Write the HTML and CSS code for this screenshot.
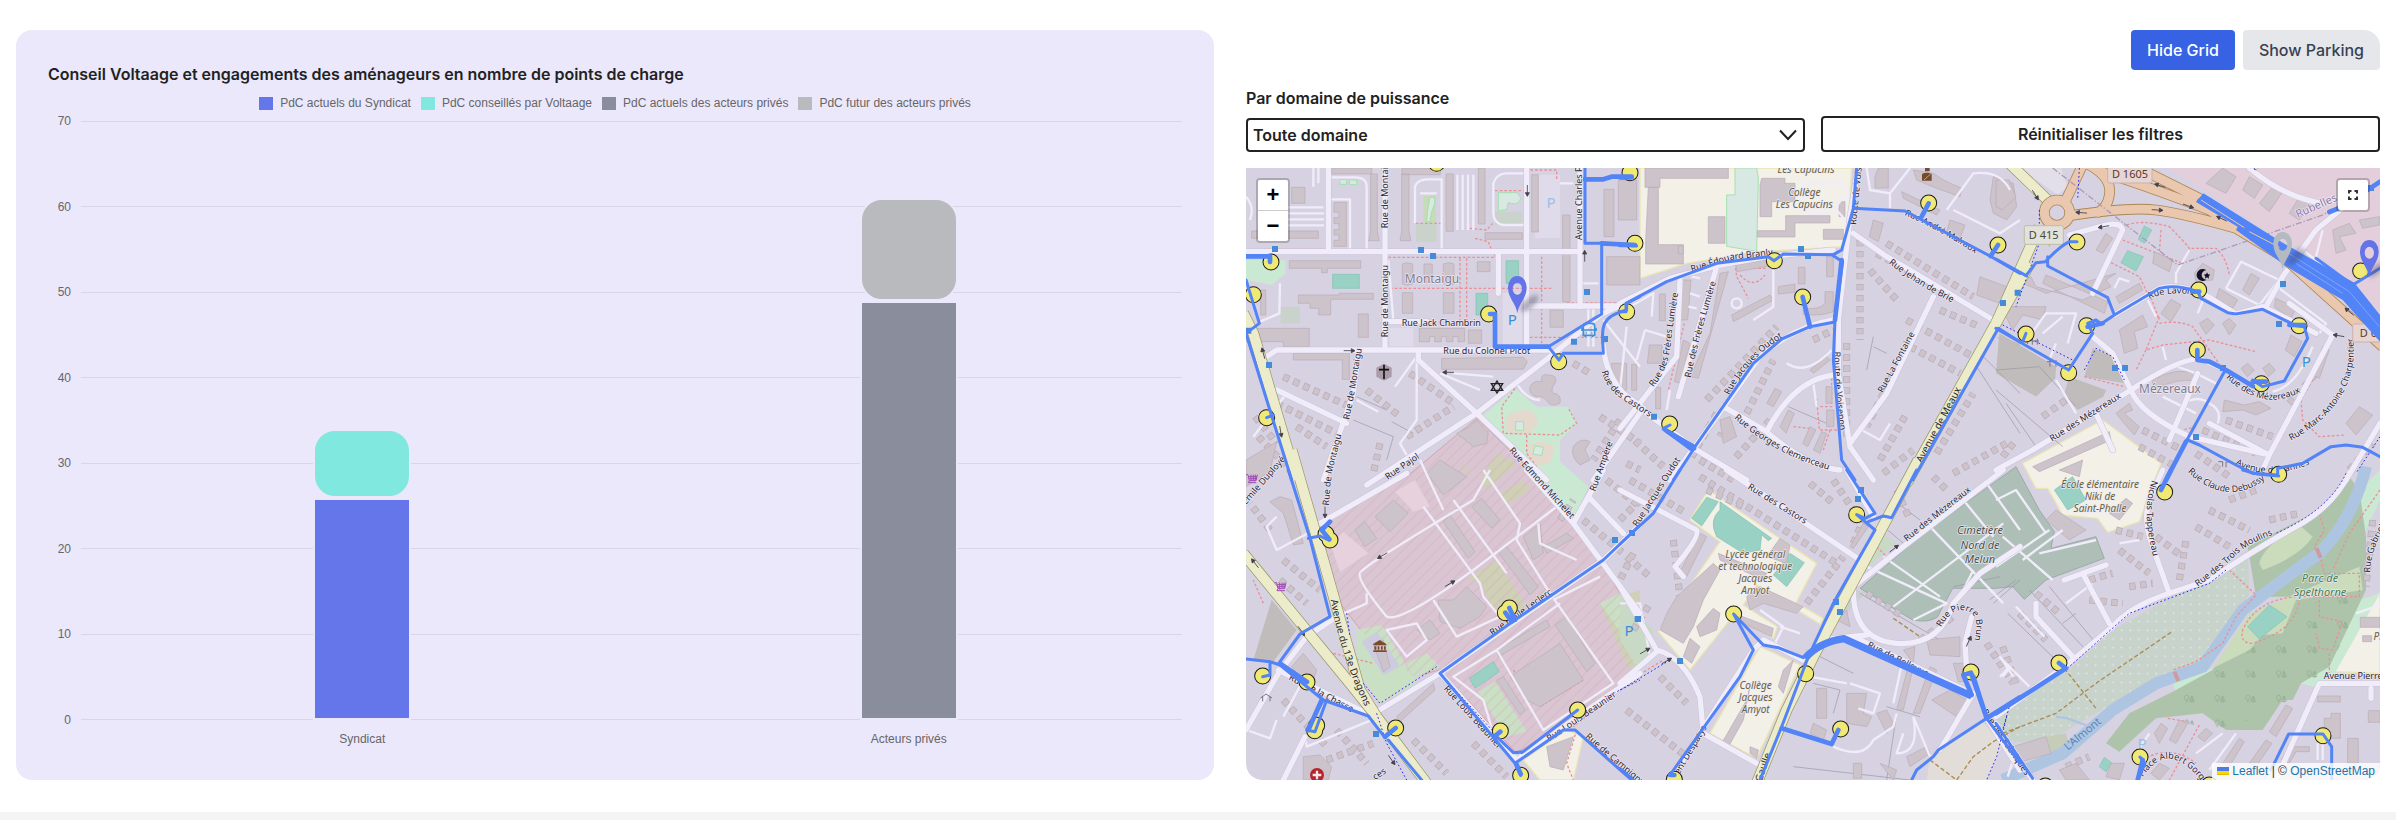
FILE: index.html
```html
<!DOCTYPE html>
<html lang="fr">
<head>
<meta charset="utf-8">
<meta name="viewport" content="width=device-width, initial-scale=1">
<title>Conseil Voltaage</title>
<link rel="stylesheet" href="styles.css">
</head>
<body>
<main class="dashboard">
  <section class="panel">
    <h2 class="panel-title">Conseil Voltaage et engagements des aménageurs en nombre de points de charge</h2>
    <ul class="legend">
      <li><span class="swatch blue"></span>PdC actuels du Syndicat</li>
      <li><span class="swatch teal"></span>PdC conseillés par Voltaage</li>
      <li><span class="swatch slate"></span>PdC actuels des acteurs privés</li>
      <li><span class="swatch grey"></span>PdC futur des acteurs privés</li>
    </ul>
    <div class="chart">
      <div class="y-axis"><span>70</span><span>60</span><span>50</span><span>40</span><span>30</span><span>20</span><span>10</span><span>0</span></div>
      <div class="lines"><i></i><i></i><i></i><i></i><i></i><i></i><i></i><i></i></div>
      <div class="bars">
        <div class="stack"><div class="bar teal round" style="height:11.43%"></div><div class="bar blue" style="height:37.14%"></div></div>
        <div class="stack"><div class="bar grey round" style="height:17.14%"></div><div class="bar slate" style="height:70%"></div></div>
      </div>
      <div class="x-axis"><span>Syndicat</span><span>Acteurs privés</span></div>
    </div>
  </section>

  <section class="map-side">
    <div class="actions">
      <button type="button" class="btn primary">Hide Grid</button>
      <button type="button" class="btn secondary">Show Parking</button>
    </div>
    <div class="filters">
      <div class="field">
        <label for="power">Par domaine de puissance</label>
        <div class="select-wrap">
          <select id="power"><option>Toute domaine</option></select>
          <svg class="chevron" viewBox="0 0 18 12" aria-hidden="true"><path d="M1 1.500 9 10l8-8.500"/></svg>
        </div>
      </div>
      <button type="button" class="reset">Réinitialiser les filtres</button>
    </div>

    <div class="map">
      <svg class="map-canvas" viewBox="0 0 1134 612" preserveAspectRatio="xMidYMid slice" role="img" aria-label="Carte de Melun">
        <defs>
          <pattern id="hatch" width="24" height="24" patternUnits="userSpaceOnUse" patternTransform="rotate(-45)"><path d="M0 12H24" stroke="#d3a9b3" stroke-width="1.500"/></pattern>
          <pattern id="dotted" width="26" height="26" patternUnits="userSpaceOnUse"><path d="M13 10v6M10 13h6" stroke="#e6ece8" stroke-width="2"/></pattern>
          <pattern id="trees" width="92" height="74" patternUnits="userSpaceOnUse"><path d="M20 32v-8m0 0c-10 0-8-14 0-14s10 14 0 14M36 32V12l-7 16h14l-7-16" fill="none" stroke="#8fac8d" stroke-width="2.500"/></pattern>
          <path id="pin" d="M0 72C-4 42-28 28-28-6A28 34 0 0 1 28-6C28 28 4 42 0 72ZM0-20A14 18 0 0 0 0 16 14 18 0 0 0 0-20Z" fill-rule="evenodd"/>
          <path id="cart" d="M0 4h7l4 18h20l4-18M8 10h26M10 16h22M16 4v18M23 4v18M29 4v18M11 22l-3 6h24" fill="none" stroke="#a04ab5" stroke-width="3"/>
          <path id="arrow" d="M-17 0H15M6-6 17 0 6 6Z" stroke-width="2.500"/>

          <path id="l1" d="M444 205V-20"/><path id="l2" d="M444 532V290"/><path id="l3" d="M328 780L345 690 368 550"/>
          <path id="l4" d="M266 1037L275 940 308 810"/><path id="l5" d="M443 960L560 880"/><path id="l6" d="M806 872L1005 1092"/>
          <path id="l7" d="M1066 995L1128 820"/><path id="l8" d="M1027 240V-80"/><path id="l9" d="M1085 635Q1100 690 1160 727L1250 785"/>
          <path id="l10" d="M100 682Q152 620 155 520L182 350"/><path id="l11" d="M212 654Q228 560 305 310"/><path id="l12" d="M215 336L330 300 480 282"/>
          <path id="l13" d="M328 706Q385 590 500 525"/><path id="l14" d="M642 575Q645 720 665 850"/><path id="l15" d="M708 195L735 -80"/>
          <path id="l16" d="M853 165Q960 210 1095 300"/><path id="l17" d="M806 310Q880 370 1020 440"/><path id="l18" d="M788 700L910 475"/>
          <path id="l19" d="M905 910L1050 640"/><path id="l20" d="M342 775Q480 895 650 935"/>
          <path id="l21" d="M460 417Q530 385 640 415"/><path id="l22" d="M168 845L400 698"/><path id="l23" d="M690 652Q810 770 940 680"/>
          <path id="l24" d="M885 842Q1110 720 1066 500"/><path id="l25" d="M718 912Q830 975 990 890"/><path id="l26" d="M650 -18L860 60"/>
          <path id="l27" d="M905 174L1040 115"/>
          <path id="l28" d="M18 105L140 -35"/><path id="l29" d="M272 390Q300 560 390 740"/><path id="l30" d="M145 628L360 740"/>
          <path id="l31" d="M757 497L960 355"/><path id="l32" d="M610 657L790 855"/><path id="l33" d="M928 815L1150 665"/><path id="l34" d="M1035 802L1220 960"/>
          <path id="l35" d="M52 172L200 -60"/><path id="l36" d="M382 55L590 185"/><path id="l37" d="M860 215L1080 42"/>
          <path id="l38" d="M963 472Q1000 405 1045 425Q1085 440 1060 520"/><path id="l39" d="M740 530L1000 660"/><path id="l40" d="M1085 725L1235 945"/>
          <path id="l41" d="M372 1090L485 760"/><path id="l42" d="M145 970L280 740"/>
          <path id="l43" d="M575 5Q700 125 830 10"/><path id="l44" d="M468 30Q425 150 500 345"/><path id="l45" d="M605 350Q680 295 720 255T860 185"/>
          <path id="l46" d="M215 842L340 740"/><path id="l47" d="M440 922Q520 800 625 945"/><path id="l48" d="M1122 308Q1125 230 1180 150"/>

          <g id="roads">
            <path class="ta" d="M18 275H1020M265 24V270M435 24V560M80 590 110 570H930M110 690 320 790M355 580 340 700 250 960M1020 24V440M535 575V600L710 760 920 960M380 975 710 760 930 590 1085 462 1200 410M860 24V560M775 275V400M870 438H1160M440 485H560M1090 555Q1095 640 1150 700L1210 745 1060 960"/>
            <path class="tb" d="M700 220 800 290 920 360 1120 480M940 410 800 700 690 850M0 430 150 355 300 315 440 290 640 270M640 480Q520 500 420 590L225 860 150 960M0 805 170 590 180 360M175 710 290 320M0 700 230 870 380 960M310 740 440 815Q560 920 660 930M440 815Q520 660 640 645M715 24 690 170 655 480 655 640 690 860 760 960"/>
            <path class="tc" d="M290 400 380 210Q375 185 330 195L220 225M290 530 350 580 405 690Q430 760 580 830L820 885M405 690 110 870 0 930M405 690Q540 600 610 595L690 630M820 885 1010 525 880 430M820 885 800 930M355 465 490 385Q540 370 620 400L720 462 800 440 960 520M810 440 860 350 960 210 1110 85M760 24Q860 110 980 130M300 760 350 870M820 885 640 790M520 840 605 640M1152 790 1050 960"/>
            <path class="td" d="M240 160 500 10M410 725 600 610 1090 270 1200 165M18 780 115 610 200 500 290 440M115 600 390 735M600 610 830 870 1200 610M860 0 1000 160 1200 430M1000 160 1045 80 1090 0M1045 80 1150 190M130 930 195 800"/>
            <path class="te" d="M320 0 720 270M0 60 230 180Q240 200 165 290L190 320M700 350 850 230 1150 0M700 360Q700 510 830 520T1000 400L1080 310 1200 230M1040 600 1035 520 1055 440M1060 670 960 840M740 495 600 510 550 570 430 510 400 540 150 930M0 350 110 540Q190 560 240 680L250 790 410 880M110 545 0 640M1055 670 700 500M680 0 760 140M1100 745 1200 900"/>
            <path class="tf" d="M1060 10Q1010 110 900 170T640 330L520 370Q400 410 350 470L230 570 0 740M520 370 470 230Q440 150 460 90L500 0M340 460 260 310 330 285 205 330M235 565 120 440V400M840 930 970 640H1152M1125 655v30M0 760 110 930"/>
          </g>
          <g id="yellow-roads">
            <path class="ta" d="M10 460 40 520 170 960"/>
            <path class="tb" d="M1230 310 1150 450 860 970"/>
            <path class="tc" d="M30 0 165 130M130 200 0 490"/>
            <path class="td" d="M155 -60 250 270 360 660 410 740 560 940M10 250 330 640 410 740"/>
            <path class="te" d="M895 -30 580 560 500 720 410 940"/>
          </g>
          <g id="orange-roads" class="tc">
            <path d="M270 10Q350 50 340 105Q335 145 300 160M210 120 262 10M215 168Q400 140 480 150T720 205L860 290 1160 560M300 30Q430 70 640 150L860 290M400 10 640 130"/>
            <circle cx="183" cy="158" r="38"/>
          </g>
          <g id="houses">
            <path class="ta" d="M130 650 330 740M110 730 300 825M45 770 110 850M170 800 260 860M380 690 480 770M420 850 400 940M510 640 640 730M500 830 640 740M1080 770 1200 850M1140 780 1060 900M1160 910 1200 930M55 830 150 930M1000 610 1050 640"/>
            <path class="tb" d="M20 820 130 920M260 720 470 500M290 760 210 900M320 790 300 830M240 900 340 960M680 550V830M720 240V540M800 250 1060 410M770 280 930 370M860 480 1060 590M870 560 1020 640M820 640 740 800M780 900 860 760M960 450 1080 500M790 940 880 870M380 760 460 600M950 880 1060 700M1000 940 1160 850M450 780 340 900M580 540 640 510M750 330 830 420"/>
            <path class="tc" d="M440 810 560 870M620 810 780 880M690 780 830 830M430 860 540 920M600 880 700 950M880 730 960 640M1060 930 1130 850M140 770 210 720M20 890 60 840"/>
            <path class="td" d="M90 180 30 100M130 270 240 360M120 330 200 400M30 280 80 340M1030 150 1150 250M1100 30 1200 110M130 690 260 830M290 780 380 880M520 810 620 910M700 820 800 920M960 150 1000 90M1180 250 1140 330M260 870 400 820"/>
            <path class="te" d="M30 30 200 130M240 20 650 280M260 60 370 110M640 30 700 120M570 40 640 100M560 400 670 260M0 150 60 90M160 210 180 380M40 480 90 400M20 720 200 860M120 620 200 700M940 20 980 60M830 60 870 150M1100 520 1180 640M700 220 730 150M20 260 90 320M900 510 1000 440M740 370 850 440"/>
            <path class="tf" d="M360 180 440 200M370 240 460 310M480 200 560 260M400 350 470 340M600 170 700 230M280 330 350 310M280 390 380 400M120 370 190 430M70 430 150 510M20 530 60 640M640 120 760 180M820 150 910 130M1130 150 1110 350M550 330 570 210M210 890 280 860M700 90 780 60"/>
          </g>
          <g id="stops">
            <path class="ta" d="M590 10h0M93 306h0M40 404h0M746 462h0M956 605h0M1160 455h0M1185 250h0M1170 38h0M80 773h0"/>
            <path class="tb" d="M463 302h0M548 411h0M926 129h0M1134 255h0M149 792h0"/>
            <path class="tc" d="M243 246h0M272 497h0M90 522h0M218 638h0M608 390h0M604 570h0M909 497h0M796 671h0M848 943h0M1094 333h0"/>
            <path class="td" d="M270 210h0M258 192h0M68 618h0M201 636h0M230 766h0M224 782h0M467 774h0M781 783h0M1013 720h0M842 916h0M808 414h0M796 428h0"/>
            <path class="te" d="M710 134h0M341 432h0M557 611h0M662 777h0M1053 606h0M163 928h0"/>
            <path class="tf" d="M506 66h0M189 579h0M432 861h0M981 797h0M148 948h0M640 945h0"/>
          </g>
        </defs>

        <rect width="1134" height="612" fill="#d6d2e2"/>

        <g class="land">
          <g class="ta">
            <path fill="#cae9d3" d="M18 300H135L138 340 95 375 18 360ZM725 770 825 685 890 740 985 740 1012 790 960 840V905L1045 980 1000 1080 870 930Z"/>
            <path fill="#e3dacd" d="M800 770Q830 740 880 755L897 790 870 820 795 822ZM860 860Q900 830 945 860L930 910 880 920 862 890Z"/>
            <path fill="#c5dcb6" d="M550 108h38v82h-38Z"/><path fill="#c9d3cb" d="M528 190h62v56h-62ZM765 155h82v40h-82ZM122 440h58v50h-58Z"/>
            <path class="garden" d="M570 112h14v20l-10 25-4 28h-10l3-35ZM775 98h55q15 10 10 25-15 15-35 4l-5 22-25 3ZM300 58h20v15h-20ZM328 60h22v14h-22ZM827 785h24v26h-24ZM885 857l25 5-5 25-26-5Z"/>
            <path class="pitch" d="M278 343h80v42h-80ZM798 302h38v68h-38ZM708 400h35v65h-35Z"/>
            <path fill="#dfdbea" d="M448 503h72v60h-72ZM788 398h58v160h-58ZM885 44h75v190h-75Z"/>
          </g>
          <g class="tb">
            <path class="school" d="M60 24H695L680 260 410 275 200 310 60 355Z"/>
            <path class="garden" d="M345 24h65l5 30-5 220-90-15V105h25Z"/>
            <path fill="#bfbcbb" d="M1130 530 1200 550V640L1150 600 1175 580Z"/>
          </g>
          <g class="tc">
            <path fill="#e2cfdb" d="M470 0H1152V470L1000 310 830 225 640 100Z"/>
            <path fill="#e3dfe9" d="M50 10H190L215 80 185 105Z"/>
            <path class="pitch" d="M445 198l22 12-22 40-18-12ZM395 272l47 18-22 43-45-25Z"/>
            <path fill="#bfbcbb" d="M10 520 180 620 178 655 120 710 0 640ZM290 565 355 590 388 670 265 650ZM220 650 330 690 322 710 245 750 205 700Z"/>
          </g>
          <g class="td">
            <path fill="#bfbcbb" d="M95 390 170 480 100 575 40 570Z"/>
            <path fill="#dac6d3" stroke="#d5a2aa" stroke-width="3" d="M710 -155 870 0 1110 320 1200 470V610L830 850 600 600 520 620 370 490 300 400 235 165 500 20Z"/>
            <path fill="#cfd0b5" d="M670 0 700 25 660 -30ZM770 -50 830 -20 740 60 720 30ZM680 330 770 270 855 400 840 440 760 420 720 340ZM1080 400 1200 360V600L1165 595ZM780 70 850 30 870 60 800 105Z"/>
            <path fill="#cae0c4" d="M1080 400 1140 370 1200 440V570ZM350 480 425 465 530 640 420 700 350 600ZM500 580 560 550 600 590 520 625ZM715 665 765 635 860 785 800 800Z"/>
            <path fill="url(#hatch)" d="M710 -155 870 0 1110 320 1200 470V610L830 850 600 600 520 620 370 490 300 400 235 165 500 20Z"/>
            <path class="pitch" d="M688 625l72-50 18 30-73 50Z"/>
            <path fill="#cccbe0" d="M365 515 410 485 480 590 430 615Z"/>
            <path fill="#e6d1dd" d="M270 220 310 185 385 250 300 305ZM465 65 525 30 570 110 520 125Z"/>
            <path class="school" d="M850 870 980 780 1030 800 1000 930H900Z"/>
          </g>
          <g class="te">
            <path class="school" d="M265 60 590 280 528 398 610 445 600 462 410 345 370 405 472 470 460 505 345 430 210 600 115 485 300 215 210 150ZM420 530 540 585 410 865 270 790Z"/>
            <path class="pitch" d="M260 82 295 95 245 168 215 145ZM300 95 455 205 445 212 425 195 420 240 370 250 290 200Q265 150 300 120ZM510 250 553 278 500 350 460 315Z"/>
            <path fill="#c8dac5" d="M0 380 100 480 90 580 50 590 0 510ZM790 190 830 220 745 290 725 280ZM1150 790 1200 700V820Z"/>
            <path fill="#e2ddd9" d="M930 870 1080 750 1150 820 1100 930H920Z"/>
            <path fill="#bacbb6" d="M610 440 600 510 740 365 690 360Z" opacity=".4"/>
          </g>
          <g class="tf">
            <path class="school" d="M80 -20 320 -150 495 -20 430 155 335 187 305 145 200 135 155 55 120 55ZM1152 370 1090 400 1015 605 1152 610Z"/>
            <path class="cemetery" d="M-408 355-230 200 60-10 130 120 175 185 165 235 300 200 325 265 150 330 85 388 50 350 0 355-130 355-175 440Q-200 460-250 450Z"/>
            <path class="pitch" d="M175 60 230 20 270 90 215 120Z"/>
            <path fill="#cae9d3" d="M1110 40 1152 0V90L1110 180 1080 200 1040 200ZM530 640 650 595 640 630 540 665ZM915 640 1090 390 1152 370 1000 640 970 655Z"/>
            <path fill="#c8d3cc" d="M20 790 0 740 230 590 350 480 520 385 650 330 755 240 760 370 700 500 600 580 470 640 300 730 180 800 60 820Z"/>
            <path fill="url(#dotted)" d="M20 790 0 740 230 590 350 480 520 385 650 330 755 240 760 370 700 500 600 580 470 640 300 730 180 800 60 820Z"/>
            <path class="forest" d="M330 820 400 730 530 665 650 600 760 440 900 380 780 380 755 230 970 120 1060 20 1090 60 1110 200 1110 360 1000 590 915 640 890 690 860 690 800 780 690 780 620 730 480 745 370 845Z"/>
            <path fill="#cadcbc" d="M790 280Q800 230 910 165L950 200Q910 260 800 300ZM650 595 760 430 1090 290 1100 360 900 390 860 490 800 495 760 540Z"/>
            <path fill="url(#trees)" d="M430 740 650 600 760 540 870 470 1000 370 1100 400 1000 590 880 690 700 780Z"/>
            <path fill="#c5cdb8" d="M150 800 210 790 220 830 160 860Z"/>
            <path class="river" d="M20 930 200 850 350 720 480 640 620 590 740 420 900 300 970 250Q1070 150 1110 -10"/>
            <path class="stream" d="M180 740 215 745 240 755 270 765"/>
            <path class="pitch" d="M755 470 820 405 873 440 790 507ZM310 890l15-28 22 16-17 27Z"/>
          </g>
        </g>

        <g class="footways">
          <path class="ta" d="M70 268H258V255M445 292H765V265M450 385H940M660 295V480M680 295V480M905 290V560M870 532H1090M527 190H605M690 205 740 210 758 190M705 235 745 245 755 270M765 92H865V30H950V60M980 428H1150L1200 400M825 685 785 740 790 820 960 825 1010 790 985 745M860 825 860 880 905 940"/>
          <path class="tb" d="M0 430 220 325 280 310M345 310 350 350 385 415M345 325H440M360 345Q400 390 435 345M193 490 145 690M590 715 598 810H660M570 805 520 800M635 640V740H600M630 810 610 870"/>
          <path class="tc" d="M380 200Q430 175 520 200 560 240 580 265H660Q690 290 700 345M380 240 560 310 580 265M495 210 490 280M345 308 430 350 460 410M490 470 450 570 500 555 640 540 780 575M490 490Q550 480 590 500L640 570 690 640M460 400 490 480M450 570 420 630M950 660 915 720 920 780 970 830 1050 825M265 650 385 680M600 800 560 810"/>
          <path class="td" d="M820 600 900 710 1030 630M70 400 40 330M1010 780 980 880 1000 930M1200 610 1000 770M280 550 400 580"/>
          <path class="te" d="M0 650 130 570M770 230 800 260"/>
          <path class="tf" d="M690 290 780 375 720 440 680 520 600 575 530 600M970 130 985 180 955 230 975 270 985 310H1090V380H900Q780 390 740 480 730 520 770 520 900 480 910 390M970 390V440L1040 455 1010 540 970 535 960 490M1000 550V610M1152 60 1060 190 1010 300M515 745 575 755M610 765 520 930M830 880 800 930M440 870Q520 820 600 880"/>
        </g>
        <g class="thin">
          <path class="ta" d="M340 780 460 830 440 900M350 710 440 750M455 785 520 820"/>
          <path class="tb" d="M760 530 740 630M760 560 800 580M1090 590 1200 700M1070 620 1200 820M505 740 620 790"/>
          <path class="tc" d="M0 630 130 620 240 740M0 690 200 860M30 730 120 860"/>
          <path class="te" d="M820 90 900 150M780 160 850 220M560 540 700 610M580 640 660 660 640 730M520 890 870 930M830 730 800 930M800 710 900 740M720 370 960 510M1000 350 1140 320M1120 400 1200 330"/>
          <path class="tf" d="M35 430 200 590M100 360 270 540M160 350 300 520M200 460 240 430M-20 390 60 330"/>
        </g>

        <use href="#houses" class="houses-edge"/>
        <use href="#houses" class="houses-fill"/>
        <g class="buildings">
          <path class="ta" d="M148 302H362V325H262V338H245V325H148ZM175 405H298V400H400V418H272V465H236V445H210V430H175ZM355 462h30v70h-30ZM18 505H208V560H130V545H18ZM160 580H328V658H307V600H160ZM155 82h40v48h-40ZM35 213H235v22H35ZM282 127h37v132h-37v-18h15v-16h-15v-16h15v-18h-15v-18h15v-16h-15ZM275 24h120v18H275ZM392 42h20v172l6 28h-32l6-28ZM485 42h22v172l6 28h-33l5-28ZM486 24h115v20H486ZM618 42h22v172h-22ZM715 24h20v168h-20ZM875 44h20v172h-20ZM735 218h112v20H735ZM968 165h22v260h-22ZM930 450h40v52h-40ZM712 305h38v30h-38ZM487 312q15-8 31 0v60q-16 8-31 0ZM610 312q15-8 32 0v60q-16 8-32 0ZM552 312h25v55h-25ZM487 398h31v62h-31ZM610 398h32v62h-32ZM538 505h136v40h-20v-15h-15v15h-20v-15h-15v15h-20v-15h-15v15h-31ZM685 510h40v40h-40ZM605 595 850 592 862 605 850 628H605ZM1092 88h30v142h-30ZM1100 290h100v85h-100ZM1135 60h55v120h-55ZM1115 610h45v80h-45ZM62 390h15v75h-15Z"/>
          <path class="ta" d="M870 680Q880 660 905 665 900 640 925 645 955 645 945 670 930 690 940 700 965 700 960 730 930 745 920 720 900 705 890 710 865 705 870 680ZM1000 860Q1020 830 1050 845L1035 870 1050 900 1020 915Q990 890 1000 860ZM650 820 690 800 710 780 745 820 740 850 700 860ZM18 900 110 845 90 935 18 980Z"/>
          <path class="tb" d="M75 24H325V55H120V82H75ZM85 82h30v172h75v28h-15v-25h15v55H77v-70ZM265 170h50v80h-50ZM425 55h70v15h30v55h-70v45h-35V75ZM412 212h85v-45h133v22H525v42H412ZM610 208h60v30h-60ZM657 125h18v45h-18ZM775 24h30v60h-40V50ZM118 402h18v80h-18ZM185 360h28l-10 120h-25ZM300 340l25-5-90 320-25-5 60-130ZM163 665 190 540 210 550 180 670ZM88 555h38v55H82ZM107 682h15v65h-15ZM35 613h15v78H35ZM535 322h20v50h-20ZM348 315 435 300 450 318 350 335ZM475 380l50-8v25l-50 5ZM335 465 450 405 460 420 340 485ZM615 395h25v60q-40 15-90 8v-18q50 5 65-15ZM620 290h20v60h-20ZM845 95 960 150 950 165 850 115ZM970 60 1025 85 1020 110 950 85 890 60 880 30 940 40ZM1120 50l60 20 10 70-30 40-40-20-10-40ZM990 180 1035 195 1020 235 980 215ZM760 180 790 190 775 245 748 230ZM1080 350l80 30-20 50-70-25ZM300 780l30-10 20 60-40 20ZM618 680h18v50h-18ZM620 750h22v50h-22ZM480 800l25-50 18 10-25 60ZM580 870l25-55 15 5-20 60ZM548 850l22-50 18 10-25 50ZM440 730l25-45 20 10-25 45ZM570 630 620 590 630 600 580 640Z"/>
          <path class="tc" d="M70 365 105 350 120 380 260 420 345 380 330 360 360 340 150 400ZM150 345 335 425 325 460 140 370ZM30 440 150 440 140 480 80 465 50 510 30 470ZM360 410 430 370 440 390 370 430ZM495 460 525 418 555 435 525 485ZM370 510 440 465 455 500 415 515 425 565 385 580ZM475 275 530 300 520 335 470 310ZM610 490l25-15 20 20-25 28ZM680 490l20-15 20 20-20 30ZM670 385 725 420 710 445 660 415ZM765 340 790 355 760 405 740 390ZM840 415 900 445 885 475 835 440ZM885 525 918 545 895 590 868 570ZM980 560 1000 570 970 655 950 645ZM735 625l20-15 20 20-20 20ZM800 625l20-15 18 20-20 20ZM470 660Q540 620 600 640L605 665Q550 650 470 690ZM685 720 745 735 790 725 825 745 780 765 740 750 680 755ZM1050 790 1090 740 1130 765 1080 825ZM740 90 760 50 800 75 775 115ZM790 130 830 80 860 95 820 155ZM880 160 910 110 940 130 910 180ZM630 70 680 24 720 50 690 100ZM1010 210 1060 190 1080 220 1030 230 1050 270 1020 280ZM1090 180 1150 170V195L1100 205ZM300 270 330 220 350 235 320 280ZM360 760 400 730 410 750 385 760 430 800 415 825 380 785ZM110 920 340 815 345 840 130 935ZM595 340 620 310 655 330 650 360 600 365ZM150 220 180 200 160 260ZM0 60 40 60 60 110 20 150 0 140Z"/>
          <path class="td" d="M90 95 120 80 155 90 190 220 160 225 130 130ZM405 140 460 90 505 130 450 185ZM345 180 375 155 410 205 375 230ZM560 10 600 -30 680 20 610 75ZM610 155 630 135 705 245 685 265ZM695 110 725 85 780 150 755 175ZM770 240 800 230 895 350 870 375ZM595 390 640 390 680 350 740 410 720 440 660 475 600 455ZM440 350ZM530 480 570 450 600 490 570 510ZM945 465 980 440 1065 580 1040 605ZM810 620 900 560 960 520 1030 630 900 710 860 690ZM850 200 900 160 910 250 880 270ZM910 230 980 190 1000 205 920 250ZM770 540 920 450 930 470 775 560ZM400 520 430 510 450 590 430 605ZM470 740 580 640 585 660 480 755ZM190 860 240 855 275 890 265 930H190ZM155 590 190 550 230 600 210 660ZM920 830 1000 800 970 900 930 890ZM770 630 790 620 855 720 840 735Z"/>
          <path class="te" d="M180 305 240 190 260 200 200 320ZM295 250 440 310 430 330 300 270ZM480 205 510 225 500 280 440 260ZM170 380 280 280 300 300 250 390 220 470 190 520 120 480 140 430ZM230 470 280 415 300 430 290 480 240 500ZM190 560 210 505 240 530 215 580ZM355 435 460 475 455 500 360 455ZM380 380 420 350 550 410 530 430 430 400 390 420ZM475 650 490 600 520 570 490 670ZM305 820 380 690 390 650 370 750 320 840ZM390 850V830l25 10-5 25ZM680 670H740L730 730 755 740 740 770 680 760ZM590 655h30v90h-30ZM770 730 800 720 820 760 800 790ZM920 510 1020 500 1020 560 930 555ZM830 720 870 570 880 590 850 720ZM880 730 930 590 950 600 900 730ZM935 690 990 660 1040 690 1010 740ZM850 540 885 530 880 580ZM650 450 680 420 690 470ZM700 880h25v45h-25ZM780 880 830 900 820 930ZM860 860 920 830 930 850 870 890ZM550 900ZM580 760 620 780 610 810 570 790ZM1000 580h35v55h-20ZM1200 610ZM690 230 730 160 745 170 700 235Z"/>
          <path class="tf" d="M190 0 260 -30 250 20ZM340 130 390 85 410 100 370 150ZM150 150 180 120 270 180 220 210ZM50 830 150 800 165 850 60 880ZM965 678h68v18h-68ZM985 745h20v-15h28v75h-48ZM1055 805h32v75h-32ZM1117 722h35v35h-35ZM870 705 890 715 840 800 820 785ZM1093 442h59v30h-59ZM1100 497h27v18h-27ZM605 800 630 775 650 790 625 815ZM475 790 495 760 515 775 490 820ZM680 880 730 805 745 815 700 890ZM760 880 810 810 828 820 780 890ZM855 870 880 830H940V845H900L880 880ZM190 900 240 880 280 930H210ZM345 880 385 880 370 930 330 920ZM465 910 490 880 520 895 490 930ZM550 750 575 760 540 820 520 810Z"/>
        </g>

        <g class="service">
          <path class="ta" d="M380 270V80Q380 50 340 52H270M525 190V80Q530 60 560 58H605V270M860 195H790Q760 190 760 160V70Q770 40 800 40H860M270 118H330V270M145 142H250M145 160H252M145 178H252M145 196H252M220 24V80M235 24V70M652 44V210M668 44V210M684 44V210M700 44V210M18 110Q45 140 30 180M120 370 118 460 60 485M445 300 460 480M465 680 530 590V780L480 850 520 920M830 670Q860 720 900 720M350 720 415 755M600 640 720 690M640 640 760 650M1090 480 1200 620M1025 370H1075M1045 440V560M1060 440V560M960 70H1000M540 100h50M40 830 140 700"/>
          <path class="tb" d="M550 70H660Q690 75 685 110 650 120 650 150L685 190M550 70V150Q560 165 630 160M740 24 750 90 810 100V145M810 100 870 24M980 150 1060 40Q1140 30 1170 90M1000 150 1140 220 1200 180M75 510 140 530M75 510 50 600M215 350 240 355M210 400 240 410M205 440 230 445M20 500 0 690M500 610Q560 650 635 570M30 440 100 400 95 470M350 430m-15 0a15 15 0 1 0 30 0a15 15 0 1 0-30 0M725 810 780 840 810 790M460 330V440L400 480M150 690 140 750M580 670 590 740"/>
          <path class="tc" d="M100 530 150 460H240L215 550M140 520 200 470M355 385 370 355 400 365M690 385 735 305 850 360M690 385 790 435 850 360M540 370V340L580 270M455 420 480 470M605 460 630 400M180 550 160 600M510 600 500 560M530 615 600 640 660 670M550 740Q600 700 640 730 680 750 665 790M500 710 600 760M850 385 990 490 970 520M830 695Q900 680 950 560M180 660 240 760M920 270 1000 330M980 210 960 290"/>
          <path class="td" d="M240 170 110 240 80 170 110 140M360 310Q350 300 700 90L750 0M360 310Q350 330 440 440 480 460 700 300L950 110M550 110 720 340 730 380 780 440 650 500 580 390M730 0 840 160 830 210 930 370 1120 640 910 780 770 540 960 400M290 440 380 400 380 370M640 90 800 310M770 540 640 620 730 690 760 790M940 390 1080 320M540 -30 610 120M895 160 900 220 1010 270M195 800 200 830 420 740M20 780 90 805 110 750M130 740 190 630M440 480 530 460 560 510 500 560Z"/>
          <path class="te" d="M570 620 680 640M690 640 780 670 760 730 715 715M640 830Q730 870 760 810L820 770 830 730M880 740Q900 850 830 850L850 790M880 740 930 860M820 700 850 560M740 290 980 400 880 450M820 410 1150 160M790 260 960 380M1100 40 1200 180M930 170 1150 400M1030 90 1120 200M1020 380 1060 300M480 470 540 490M1140 560 1180 620M1170 590 1140 620M420 420 490 470 460 530M0 400 60 400 90 560"/>
          <path class="tf" d="M10 560 100 650M20 620 45 590M60 410 145 500M0 90 60 60 150 190M0 290 160 180M80 270 200 180M20 200 170 330M130 250 300 210M290 340 210 400M370 220 430 210M35 920 55 860M600 850 680 790M640 900 720 790M965 820v50M980 820v50M1080 430 1152 405M420 850 460 790M370 560"/>
        </g>
        <use href="#roads" class="road-edge"/>
        <use href="#roads" class="road-fill"/>
        <use href="#yellow-roads" class="yellow-edge"/>
        <use href="#yellow-roads" class="yellow-fill"/>
        <use href="#orange-roads" class="orange-edge"/>
        <use href="#orange-roads" class="orange-fill"/>
        <g class="cycle">
          <path class="tc" d="M130 150V250L60 440M250 24 245 120M20 495 230 600M265 630 300 565 350 590 385 660M1152 830 1080 940"/>
          <path class="td" d="M320 430 330 500M370 640 420 700 590 590M600 610 820 850 850 850M410 730 440 820 500 930M1100 680 1200 630"/>
          <path class="te" d="M0 660 150 570M1160 740 1130 860 1100 930"/>
          <path class="tf" d="M1050 10Q1000 120 840 190M690 300 640 340 400 430 220 590 40 710 20 780"/>
        </g>
        <g class="border"><path class="tc" d="M170 24 545 315 980 165 1152 70"/></g>
        <g class="tracks"><path class="tf" d="M525 487 300 640 180 730 20 790M205 595 300 715"/><path class="te" d="M820 445 900 500M930 870 1010 930 1060 860 1120 815 1200 770"/></g>
        <g class="bridges"><path class="tf" d="M535 605l12 28M962 235l12 28"/></g>

        <g class="arrows">
          <g class="ta"><use href="#arrow" transform="translate(862 92) rotate(90)"/><use href="#arrow" transform="translate(1034 288) rotate(-90)"/><use href="#arrow" transform="translate(328 572)"/><use href="#arrow" transform="translate(625 637) rotate(180)"/><use href="#arrow" transform="translate(70 580) rotate(-105)"/><use href="#arrow" transform="translate(122 815) rotate(80)"/></g>
          <g class="tc"><use href="#arrow" transform="translate(118 105) rotate(58)"/><use href="#arrow" transform="translate(256 158) rotate(185)"/><use href="#arrow" transform="translate(323 200) rotate(170)"/><use href="#arrow" transform="translate(484 150) rotate(4)"/><use href="#arrow" transform="translate(577 138) rotate(20)"/><use href="#arrow" transform="translate(492 77) rotate(198)"/><use href="#arrow" transform="translate(677 176) rotate(205)"/><use href="#arrow" transform="translate(1060 455) rotate(220)"/><use href="#arrow" transform="translate(1028 527) rotate(190)"/></g>
          <g class="td"><use href="#arrow" transform="translate(45 280) rotate(232)"/><use href="#arrow" transform="translate(255 127) rotate(90)"/><use href="#arrow" transform="translate(427 257) rotate(150)"/><use href="#arrow" transform="translate(630 341) rotate(-30)"/><use href="#arrow" transform="translate(184 483) rotate(55)"/><use href="#arrow" transform="translate(455 870) rotate(55)"/></g>
          <g class="te"><use href="#arrow" transform="translate(822 236) rotate(-38)"/><use href="#arrow" transform="translate(1046 514) rotate(-65)"/><use href="#arrow" transform="translate(75 543) rotate(-30)"/><use href="#arrow" transform="translate(140 573) rotate(-30)"/></g>
        </g>

        <g class="poi">
          <g class="ta">
            <path fill="#ab9ba8" d="M432 611l23 12v27l-23 12-23-12v-27Z"/><path fill="none" stroke="#111" stroke-width="5" d="M432 614v43M417 629h30"/>
            <path fill="none" stroke="#222" stroke-width="4" d="M771 663l17 28h-34ZM771 699l17-28h-34Z"/>
            <path class="bus" d="M1030 498q0-8 8-8h18q8 0 8 8v28h-34ZM1030 510h34M1036 532v-6M1058 532v-6M1026 503v10M1068 503v10M1037 519h3M1054 519h3"/>
          </g>
          <g class="tb"><path fill="#734a2c" d="M915 24h14v10h-14ZM906 42q15-8 29 0v20h-29Z"/><path stroke="#d6d2e2" stroke-width="2" d="M912 60l20-18"/></g>
          <g class="tc">
            <path fill="#141027" d="M631 331a18 18 0 1 0 0 28 14 14 0 1 1 0-28ZM633 337l3 6 7 1-5 5 1 7-6-4-6 4 1-7-5-5 7-1Z"/>
            <path class="bench" d="M95 552v-10h14v12M109 543h20M124 536v18M153 605h22M162 600v20M180 600v20M667 905h13v15M690 922v-16h8M480 0" />
          </g>
          <g class="td">
            <use href="#cart" transform="translate(17 10)"/><use href="#cart" transform="translate(103 334)"/>
            <path fill="#7a4a2a" d="M400 522l19-12 20 12v4h-39ZM403 529h6v10h-6ZM413 529h5v10h-5ZM423 529h5v10h-5ZM432 529h5v10h-5ZM400 541h40v5h-40Z"/>
            <circle cx="231" cy="915" r="21" fill="#b5242c"/><path stroke="#f4e9ee" stroke-width="7" d="M218 915h26M231 902v26"/>
            <path class="bench" d="M62 684l16-12 18 12M68 680v14M90 680v14"/>
          </g>
        </g>

        <g class="labels">
          <g class="ta">
            <text x="485" y="497">Rue Jack Chambrin</text><text x="610" y="581">Rue du Colonel Picot</text>
            <text><textPath href="#l1">Rue de Montaigu</textPath></text><text><textPath href="#l2">Rue de Montaigu</textPath></text><text><textPath href="#l3">Rue de Montaigu</textPath></text><text><textPath href="#l4">Rue de Montaigu</textPath></text>
            <text><textPath href="#l5">Rue Pajol</textPath></text><text><textPath href="#l6">Rue Edmond Michelet</textPath></text><text><textPath href="#l7">Rue Ampère</textPath></text><text><textPath href="#l8">Avenue Charles Péguy</textPath></text><text><textPath href="#l9">Rue des Castors</textPath></text>
            <text class="place" x="576" y="369">Montaigu</text><text class="parking" x="817" y="494">P</text><text class="parking faint" x="933" y="145">P</text>
          </g>
          <g class="tb">
            <text><textPath href="#l10">Rue des Frères Lumière</textPath></text><text><textPath href="#l11">Rue des Frères Lumière</textPath></text><text><textPath href="#l12">Rue Édouard Branly</textPath></text><text><textPath href="#l13">Rue Jacques Oudot</textPath></text><text><textPath href="#l14">Route de Voisenon</textPath></text><text><textPath href="#l15">Route de Voisenon</textPath></text><text><textPath href="#l16">Rue André Malraux</textPath></text><text><textPath href="#l17">Rue Jehan de Brie</textPath></text><text><textPath href="#l18">Rue La Fontaine</textPath></text><text class="major"><textPath href="#l19">Avenue de Meaux</textPath></text><text><textPath href="#l20">Rue Georges Clemenceau</textPath></text>
            <text class="campus" x="558" y="39">Les Capucins</text><text class="campus" x="553" y="109">Collège<tspan x="553" dy="35">Les Capucins</tspan></text>
          </g>
          <g class="tc">
            <text><textPath href="#l21">Rue Lavoisier</textPath></text><text><textPath href="#l22">Rue des Mézereaux</textPath></text><text><textPath href="#l23">Rue des Mézereaux</textPath></text><text><textPath href="#l24">Rue Marc-Antoine Charpentier</textPath></text><text><textPath href="#l25">Avenue de Lannes</textPath></text><text><textPath href="#l26">Rue J. Ferré</textPath></text><text class="commune"><textPath href="#l27">Rubelles</textPath></text>
            <text class="place" x="522" y="699">Mézereaux</text><text class="parking" x="931" y="620">P</text>
            <rect class="shield green" x="85" y="197" width="117" height="56" rx="5"/><text class="ref dark-green" x="143" y="236">D 415</text>
            <rect class="shield" x="335" y="15" width="133" height="54" rx="5"/><text class="ref" x="402" y="54">D 1605</text>
            <rect class="shield" x="1070" y="492" width="133" height="54" rx="5"/><text class="ref" x="1136" y="530">D 605</text>
          </g>
          <g class="td">
            <text><textPath href="#l28">Émile Duployé</textPath></text><text class="major"><textPath href="#l29">Avenue du 13e Dragons</textPath></text><text><textPath href="#l30">Rue de la Chasse</textPath></text><text><textPath href="#l31">Rue Émile Leclerc</textPath></text><text><textPath href="#l32">Rue Louis Beaunier</textPath></text><text><textPath href="#l33">Rue Louis Beaunier</textPath></text><text><textPath href="#l34">Rue de Campigny</textPath></text><text x="405" y="930" transform="rotate(-32 405 930)">ces</text>
            <text class="parking" x="1167" y="497">P</text>
          </g>
          <g class="te">
            <text><textPath href="#l35">Rue Jacques Oudot</textPath></text><text><textPath href="#l36">Rue des Castors</textPath></text><text><textPath href="#l37">Rue des Mézereaux</textPath></text><text><textPath href="#l38">Rue Pierre Brun</textPath></text><text><textPath href="#l39">Rue de Bellevue</textPath></text><text><textPath href="#l40">Rue des Fabriques</textPath></text><text class="major"><textPath href="#l41">Général de Gaulle</textPath></text><text><textPath href="#l42">Clément Despatys</textPath></text>
            <text class="campus" x="406" y="264">Lycée général<tspan x="406" dy="36">et technologique</tspan><tspan x="406" dy="36">Jacques</tspan><tspan x="406" dy="36">Amyot</tspan></text>
            <text class="campus" x="407" y="657">Collège<tspan x="407" dy="36">Jacques</tspan><tspan x="407" dy="36">Amyot</tspan></text>
            <text class="grave" x="1080" y="193">Cimetière<tspan x="1080" dy="43">Nord de</tspan><tspan x="1080" dy="43">Melun</tspan></text>
          </g>
          <g class="tf">
            <text class="campus" x="312" y="53">École élémentaire<tspan x="312" dy="36">Niki de</tspan><tspan x="312" dy="36">Saint-Phalle</tspan></text>
            <text><textPath href="#l43">Rue Claude Debussy</textPath></text><text><textPath href="#l44">Nicolas Tappereau</textPath></text><text><textPath href="#l45">Rue des Trois Moulins</textPath></text><text class="water"><textPath href="#l46">L'Almont</textPath></text><text><textPath href="#l47">Place Albert Gorge</textPath></text><text><textPath href="#l48">Rue Gabriel</textPath></text>
            <text x="983" y="628">Avenue Pierre</text><text class="campus" x="1145" y="510">Pi</text>
            <text class="park" x="972" y="336">Parc de<tspan x="972" dy="43">Spelthorne</tspan></text><text class="parking faint" x="438" y="838">P</text>
          </g>
        </g>

        <g class="bus-stops">
          <path class="ta" d="M105 267h0M543 270h0M579 288h0M87 615h0M1041 396h0M1002 545h0M1095 537h0M25 512h0"/>
          <path class="tb" d="M543 267h0M564 288h0M1149 429h0M102 770h0M1193 398h0"/>
          <path class="tc" d="M861 372h0M849 492h0M357 624h0M387 624h0M681 624h0M600 831h0M1125 84h0"/>
          <path class="td" d="M1125 210h0M1176 189h0M408 792h0M1193 447h0"/>
          <path class="te" d="M54 447h0M180 573h0M714 87h0M723 60h0M648 396h0M660 426h0"/>
        </g>

        <use href="#stops" class="stop-edge"/>
        <use href="#stops" class="stop-fill"/>

        <g class="network">
          <path class="ta" d="M18 360 58 490 18 520 155 960M925 560 1085 462V248M925 560 957 600 970 580H1090C1085 500 1080 470 1160 450V430L1200 410M1035 24V250H1085L1190 258M80 773 100 765"/>
          <path class="tb" d="M0 455H18V430L140 365 290 310 445 290 462 302 490 282 640 284 665 270 700 145 710 24M635 284 668 305 645 480 640 600 665 900 705 960M700 145 855 153 1110 288 1200 340M640 487 570 500 485 537 400 610 225 860 130 805 150 795M130 808 218 872 160 960M1200 545 1135 505 878 960"/>
          <path class="tc" d="M0 297 90 347 120 308 148 305Q190 260 220 245H243M155 290V318L335 413 355 465M0 505 218 630 290 520 275 490 300 480 315 492 355 465 490 385Q540 372 605 395L615 415 695 458 720 462 800 448 900 497 925 500 935 535 865 663 800 680 770 660M685 635 570 845 510 960M575 840 610 855 720 915 770 940 845 945V925L920 910 1005 860 1050 855 1100 862 1152 890M90 520 80 545M960 295 1070 375 1152 325"/>
          <path class="td" d="M145 0 210 205 270 440 180 492 120 575M18 567 90 575V615L68 620M90 575 120 585 250 690 385 738 435 803 467 774M445 810 545 930M250 690 200 780 225 785 260 690M205 205 240 198 265 210M1200 165 1090 270 825 450 600 610 825 880 842 916M770 800 820 848 850 845 1013 720M825 880 970 780H1005L1175 930"/>
          <path class="te" d="M180 0 100 130 0 222M680 0 765 130 735 145 710 134 765 180 640 400 565 560 485 770 420 930M745 155 790 138 815 143 890 0M1200 685 1100 745 955 840 940 860 890 900 875 930M1100 745 1200 880M341 432 400 540 360 620 150 915M341 432 430 525 475 533 550 563M0 895 40 930"/>
          <path class="tf" d="M0 760 110 925M432 861 447 880 425 930M825 900 878 792H981L1007 830V930M740 0 785 12 848 18"/>
        </g>
        <g class="network wide">
          <path class="ta" d="M18 289H90V306M750 462H765V560H925M1085 250 1180 255M1035 58H1090L1115 50H1175"/>
          <path class="tb" d="M548 411 570 500M905 170 926 130M1112 288 1134 255M0 52H35M0 255H45M665 300 645 480M222 865 140 812"/>
          <path class="tc" d="M604 570V600L640 605 690 630 770 678M570 845 510 960M275 500 320 490M590 395 610 395M1000 156 1040 140 1152 65M860 260 870 280M880 495H925M770 665H810"/>
          <path class="td" d="M270 155 245 180 268 208M796 428 815 455M808 414 825 450M765 798 781 785M120 580 201 636M245 690 205 780M435 800 467 774M828 880 842 912"/>
          <path class="te" d="M485 775 635 822 655 780M1055 675 1030 615 1053 608 1100 745 1200 682M163 915 150 915M1060 620 1100 745"/>
          <path class="tf" d="M525 0 495 60M0 730 210 595 189 579M440 870 425 930"/>
        </g>
        <g class="te"><path class="trunk" d="M555 565Q600 515 672 506L1055 678"/></g>
        <g class="tc">
          <path fill="#5283f7" d="M612 112 622 100 860 248 925 285 1075 368 1152 465V545L1040 420 880 325 720 210 725 200 600 126 605 118Z"/>
          <path fill="none" stroke="#eac8ae" stroke-width="3" d="M615 120 745 203M760 215 850 262"/>
          <path fill="none" stroke="#9ab4fa" stroke-width="2" d="M870 275 1060 395 1150 500M900 310 1040 400"/>
        </g>

        <g class="ta"><ellipse class="shadow" cx="868" cy="430" rx="34" ry="14" transform="rotate(-42 868 430)"/><use href="#pin" x="832" y="388" fill="#6573e9"/></g>
        <g class="tc"><ellipse class="shadow" cx="900" cy="290" rx="34" ry="14" transform="rotate(-42 900 290)"/><ellipse class="shadow" cx="1140" cy="330" rx="30" ry="12" transform="rotate(-42 1140 330)"/><use href="#pin" x="860" y="256" fill="#b5b9c0"/><use href="#pin" x="1120" y="280" fill="#6573e9"/></g>
      </svg>

      <div class="zoom">
        <button type="button" aria-label="Zoom avant">+</button>
        <button type="button" aria-label="Zoom arrière">−</button>
      </div>
      <button type="button" class="fullscreen" aria-label="Plein écran">
        <svg viewBox="0 0 10 10"><path d="M1 3.500V1h2.500M6.500 1H9v2.500M9 6.500V9H6.500M3.500 9H1V6.500"/></svg>
      </button>
      <div class="attribution">
        <svg viewBox="0 0 12 8" aria-hidden="true"><path fill="#4c7be1" d="M0 0h12v4H0z"/><path fill="#ffd500" d="M0 4h12v3H0z"/><path fill="#e0bc00" d="M0 7h12v1H0z"/></svg>
        <a href="#">Leaflet</a> | © <a href="#">OpenStreetMap</a>
      </div>
    </div>
  </section>
</main>
</body>
</html>
```
FILE: styles.css
```css
* { box-sizing: border-box; }
body { margin: 0; background: #f3f4f6; color: #222; font: 16px/24px Inter, "Liberation Sans", sans-serif; }
button, select { font: inherit; color: inherit; margin: 0; }
button { cursor: pointer; }

.dashboard { display: grid; grid-template-columns: 50vw minmax(0, 1fr); gap: 32px; height: calc(100vh - 8px); min-height: 600px; padding: 30px 16px 32px; background: #fff; }

/* Chart */
.panel { display: flex; flex-direction: column; padding: 32px; border-radius: 16px; background: #ebe8fc; }
.panel-title { margin: 0; font-size: 16px; line-height: 24px; font-weight: 600; }
.legend { display: flex; justify-content: center; gap: 10px; margin: 10px 0 0; padding: 0; list-style: none; font: 12px/14px "Liberation Sans", Arial, sans-serif; color: #666; }
.legend li { display: flex; align-items: center; gap: 7px; }
.swatch { width: 14px; height: 13px; }
.blue { background: #6476ea; }
.teal { background: #80e8de; }
.slate { background: #8a8e9c; }
.grey { background: #b8babd; }
.chart { flex: 1; display: grid; grid-template: minmax(0, 1fr) auto / 23px 10px minmax(0, 1fr); margin-top: 11px; font: 12px/14px "Liberation Sans", Arial, sans-serif; color: #666; }
.y-axis { display: flex; flex-direction: column; justify-content: space-between; margin: -7px 0; text-align: right; }
.lines { grid-area: 1 / 3; display: flex; flex-direction: column; justify-content: space-between; }
.lines i { height: 1px; background: #d8d5e8; }
.bars { grid-area: 1 / 3; display: grid; grid-template-columns: 1fr 1fr; padding-left: 8px; }
.stack { display: flex; flex-direction: column; justify-content: flex-end; align-items: center; }
.bar { width: 18%; border: 2px solid #ebe8fc; }
.bar.round { border-radius: 22px; }
.x-axis { grid-area: 2 / 3; display: grid; grid-template-columns: 1fr 1fr; padding: 12px 0 2px 8px; text-align: center; }

/* Map column */
.map-side { display: flex; flex-direction: column; gap: 16px; min-width: 0; border-radius: 16px; overflow: hidden; }
.actions { display: flex; justify-content: flex-end; gap: 8px; }
.btn { height: 40px; padding: 0 16px; border: 0; border-radius: 4px; font-weight: 500; }
.primary { background: #3662e3; color: #fff; }
.secondary { background: #e5e7eb; color: #374151; }
.filters { display: grid; grid-template-columns: 1fr 1fr; gap: 16px; align-items: end; font-weight: 600; }
.field { display: grid; gap: 8px; }
.select-wrap { display: grid; }
.select-wrap > * { grid-area: 1 / 1; }
select { width: 100%; height: 34px; padding: 0 32px 0 5px; border: 2px solid #222; border-radius: 4px; background: #fff; appearance: none; }
.chevron { width: 18px; height: 12px; margin-right: 8px; place-self: center end; pointer-events: none; fill: none; stroke: #222; stroke-width: 2; }
.reset { height: 36px; border: 2px solid #222; border-radius: 4px; background: #fff; }
.map { position: relative; flex: 1; min-height: 0; overflow: hidden; border-radius: 0 0 16px 16px; }
.map-canvas { position: absolute; inset: 0; width: 100%; height: 100%; }

/* Leaflet-style controls */
.zoom, .fullscreen { position: absolute; top: 10px; border: 2px solid rgba(0, 0, 0, .2); border-radius: 4px; background-clip: padding-box; }
.zoom { left: 10px; display: grid; }
.zoom button { width: 30px; height: 31px; padding: 0; border: 0; border-bottom: 1px solid #ccc; border-radius: 2px 2px 0 0; background: #fff; font: bold 22px/30px "Liberation Sans", sans-serif; color: #000; }
.zoom button:last-child { height: 30px; border-bottom: 0; border-radius: 0 0 2px 2px; }
.fullscreen { right: 10px; display: grid; place-items: center; width: 34px; height: 34px; padding: 0; background-color: #fff; }
.fullscreen svg { width: 10px; height: 10px; fill: none; stroke: #333; stroke-width: 2; }
.attribution { position: absolute; right: 0; bottom: 0; padding: 0 5px; background: rgba(255, 255, 255, .8); font: 12px/17px "Liberation Sans", sans-serif; color: #333; }
.attribution svg { width: 12px; height: 8px; }
.attribution a { color: #2374a8; text-decoration: none; }

/* Map tiles, drawn at three units per pixel */
.ta { transform: translate(-6px, -8px) scale(.333333); }
.tb { transform: translate(374px, -8px) scale(.333333); }
.tc { transform: translate(750px, -8px) scale(.333333); }
.td { transform: translate(-6px, 302px) scale(.333333); }
.te { transform: translate(374px, 302px) scale(.333333); }
.tf { transform: translate(750px, 302px) scale(.333333); }

.pitch { fill: #99d1c4; stroke: #82c3b1; stroke-width: 2; }
.garden { fill: #d8e9e3; stroke: #a5dfb0; stroke-width: 3; }
.school { fill: #f3f0e8; stroke: #ebe5b4; stroke-width: 4; }
.cemetery { fill: #adbfb7; stroke: #8b9b94; stroke-width: 2; }
.forest { fill: #adc4ab; }
.river { fill: none; stroke: #aec5e2; stroke-width: 36; }
.stream { fill: none; stroke: #aec5e2; stroke-width: 7; }
.footways { fill: none; stroke: #ec8f95; stroke-width: 4; stroke-dasharray: 8 6; }
.thin { fill: none; stroke: #9996a3; stroke-width: 2; }
.houses-edge { fill: none; stroke: #baaab5; stroke-width: 21; stroke-dasharray: 19 14; }
.houses-fill { fill: none; stroke: #cdc3cb; stroke-width: 17; stroke-dasharray: 15 18; stroke-dashoffset: -2; }
.buildings { fill: #cdc3cb; stroke: #b9abb5; stroke-width: 2; }
.service { fill: none; stroke: #f0ecfa; stroke-width: 7; stroke-linejoin: round; }
.road-edge { fill: none; stroke: #c9c4d6; stroke-width: 19; stroke-linejoin: round; stroke-linecap: round; }
.road-fill { fill: none; stroke: #f0ecfa; stroke-width: 16; stroke-linejoin: round; stroke-linecap: round; }
.yellow-edge { fill: none; stroke: #929461; stroke-width: 34; }
.yellow-fill { fill: none; stroke: #ecebca; stroke-width: 30; }
.orange-edge { fill: none; stroke: #ae8752; stroke-width: 32; }
.orange-fill { fill: none; stroke: #eac8af; stroke-width: 27; }
.cycle { fill: none; stroke: #2424ed; stroke-width: 3; stroke-dasharray: 5 7; }
.border { fill: none; stroke: #ad9abb; stroke-width: 4; stroke-dasharray: 18 6 4 6; }
.tracks { fill: none; stroke: #ab8b51; stroke-width: 4; stroke-dasharray: 13 7; }
.bridges { fill: none; stroke: #d09a9f; stroke-width: 12; }
.arrows { fill: #44414c; stroke: #44414c; }
.bus { fill: none; stroke: #4090d9; stroke-width: 5; }
.bench { fill: none; stroke: #77737f; stroke-width: 3; }

.labels text { font: 27px "Noto Sans", sans-serif; fill: #2a2633; stroke: #eeeaf6; stroke-width: 4; stroke-linejoin: round; paint-order: stroke; }
.labels .major { font-size: 30px; stroke: #ecebca; }
.labels .campus { font-size: 30px; font-style: italic; fill: #65623d; text-anchor: middle; }
.labels .place { font-size: 36px; fill: #817c8c; text-anchor: middle; }
.labels .commune { font-size: 33px; fill: #9078a5; }
.labels .grave { font-size: 33px; font-style: italic; fill: #45504b; text-anchor: middle; }
.labels .park { font-size: 33px; font-style: italic; fill: #437b4b; text-anchor: middle; }
.labels .water { font-size: 33px; fill: #5685bd; stroke: none; }
.labels .parking { font-size: 45px; fill: #3b8dd8; stroke: none; text-anchor: middle; }
.labels .faint { fill: #9bc0e8; }
.labels .ref { font-size: 33px; fill: #593a2d; stroke: none; text-anchor: middle; }
.labels .dark-green { fill: #47492f; }
.shield { fill: #e6d5d3; stroke: #cbb2ac; stroke-width: 3; }
.shield.green { fill: #e2e1dc; stroke: #bebfa5; }
.bus-stops { fill: none; stroke: #468bd8; stroke-width: 18; stroke-linecap: square; }
.stop-edge { fill: none; stroke: #1c1c16; stroke-width: 51; stroke-linecap: round; }
.stop-fill { fill: none; stroke: #f0e973; stroke-width: 45; stroke-linecap: round; }
.network { fill: none; stroke: #5283f7; stroke-width: 9; stroke-linejoin: round; stroke-linecap: round; }
.network.wide { stroke-width: 14; }
.trunk { fill: none; stroke: #5283f7; stroke-width: 22; }
.shadow { fill: #3d3a52; opacity: .35; filter: blur(6px); }
```
